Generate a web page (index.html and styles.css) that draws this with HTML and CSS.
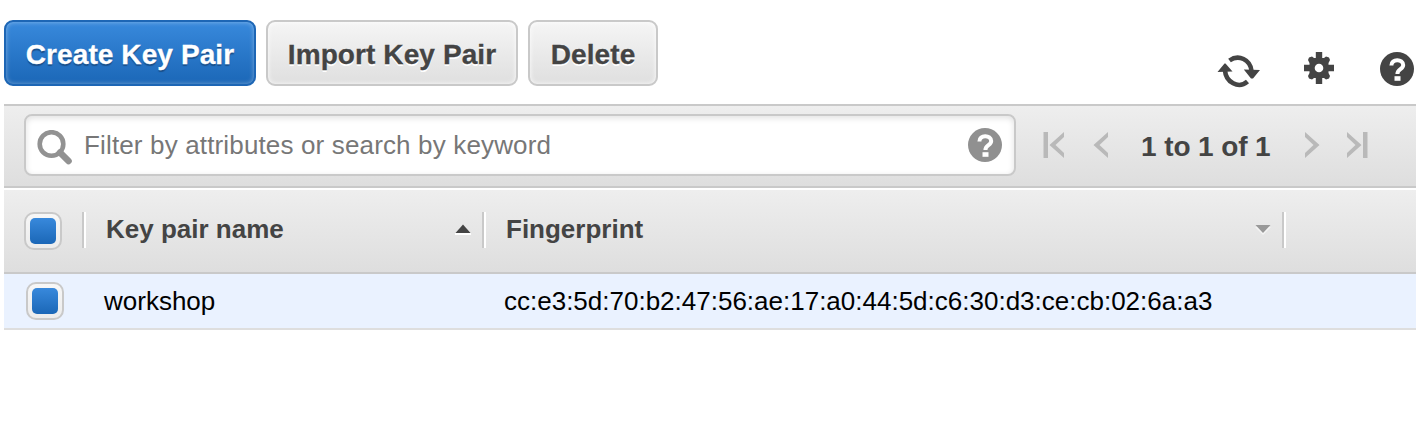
FILE: index.html
```html
<!DOCTYPE html>
<html lang="en">
<head>
<meta charset="utf-8">
<title>Key Pairs</title>
<link rel="stylesheet" href="styles.css">
</head>
<body>
<main class="page">
  <header class="actions">
    <button class="btn primary">Create Key Pair</button>
    <button class="btn">Import Key Pair</button>
    <button class="btn delete">Delete</button>
    <div class="tools">
      <svg class="refresh" width="44" height="36" viewBox="0 0 44 36" fill="none" stroke="#444" stroke-width="4.6">
        <path d="M12.500 7.500C21.500 1 33.500 6.500 34.500 18"/>
        <path d="M30.500 28.500C21.500 36.500 8.800 29 8 17.500"/>
        <path fill="#444" stroke="none" d="M26.800 16.500L43 17L36 25.500H34ZM0.500 19L7.500 10.500H8.500L15.500 18.500Z"/>
      </svg>
      <svg class="gear" width="32" height="34" viewBox="0 0 32 34">
        <g fill="#444">
          <path d="M12.800 1h6.400v32h-6.400zM1 13.800h30v6.400H1z"/>
          <path d="M6 6.500L9 5.500L11 7H21L23 5.500L26 6.500L27 9L25.500 12V22L27 25L26 27.500L23 28.500L21 27H11L9 28.500L6 27.500L5 25L6.500 22V12L5 9Z"/>
        </g>
        <circle cx="16" cy="17" r="4.300" fill="#fff"/>
      </svg>
      <svg class="help" width="34" height="34" viewBox="0 0 34 34">
        <circle cx="17" cy="17" r="17" fill="#444"/>
        <path d="M11.4 13.5C11 6.7 23.2 6.4 23.2 13.1C23.2 17.5 17.4 17 17.4 22" fill="none" stroke="#fff" stroke-width="4"/>
        <path d="M14.5 24.2h6v4.6h-6z" fill="#fff"/>
      </svg>
    </div>
  </header>

  <section class="filterbar">
    <div class="search">
      <svg class="magnifier" width="36" height="36" viewBox="0 0 36 36" fill="none" stroke="#929292">
        <circle cx="14.500" cy="14" r="11.800" stroke-width="4.600"/>
        <path d="M23 22.500L31.500 31" stroke-width="6.600" stroke-linecap="round"/>
      </svg>
      <span class="placeholder">Filter by attributes or search by keyword</span>
      <svg class="hint" width="34" height="34" viewBox="0 0 34 34">
        <circle cx="17" cy="17" r="17" fill="#909090"/>
        <path d="M11.4 13.5C11 6.7 23.2 6.4 23.2 13.1C23.2 17.5 17.4 17 17.4 22" fill="none" stroke="#fff" stroke-width="4"/>
        <path d="M14.5 24.2h6v4.6h-6z" fill="#fff"/>
      </svg>
    </div>
    <nav class="pager">
      <svg class="first" width="22" height="28" viewBox="0 0 22 28"><path fill="#b9b9b9" d="M0.500 1H5v26H0.500zM21 1v5l-8.500 8 8.500 8v5L6.500 14z"/></svg>
      <svg class="prev" width="16" height="28" viewBox="0 0 16 28"><path fill="#b9b9b9" d="M15 1v5l-8.500 8 8.500 8v5L0.500 14z"/></svg>
      <span class="range">1 to 1 of 1</span>
      <svg class="next" width="16" height="28" viewBox="0 0 16 28"><path fill="#b9b9b9" d="M1 1v5l8.500 8-8.500 8v5l14.500-13z"/></svg>
      <svg class="last" width="22" height="28" viewBox="0 0 22 28"><path fill="#b9b9b9" d="M1 1v5l8.500 8-8.500 8v5l14.500-13zM17 1h4.500v26H17z"/></svg>
    </nav>
  </section>

  <section class="grid">
    <div class="row head">
      <div class="cell select"><span class="check"></span></div>
      <div class="cell name">Key pair name
        <svg class="sort" width="16" height="11" viewBox="0 0 16 11"><path fill="#fff" d="M0 9h16v2H0z"/><path fill="#444" d="M0.500 9L8 0.500L15.500 9z"/></svg>
      </div>
      <div class="cell print">Fingerprint
        <svg class="sort" width="16" height="11" viewBox="0 0 16 11"><path fill="#f4f4f4" d="M0 3L8 11L16 3z"/><path fill="#999" d="M0.500 1h15L8 9z"/></svg>
      </div>
    </div>
    <div class="row item">
      <div class="cell select"><span class="check"></span></div>
      <div class="cell name">workshop</div>
      <div class="cell print">cc:e3:5d:70:b2:47:56:ae:17:a0:44:5d:c6:30:d3:ce:cb:02:6a:a3</div>
    </div>
  </section>
</main>
</body>
</html>
```
FILE: styles.css
```css
* { box-sizing: border-box; }

body {
  margin: 0;
  background: #fff;
  color: #444;
  font-family: "Liberation Sans", Arial, sans-serif;
}

svg { display: block; flex: none; }

.page {
  width: 1416px;
  height: 422px;
  padding-left: 4px;
  overflow: hidden;
}

.actions {
  display: flex;
  gap: 10px;
  height: 104px;
  padding-top: 20px;
}

.btn {
  width: 252px;
  height: 66px;
  padding: 3px 0 0;
  border: 2px solid #c9c9c9;
  border-radius: 9px;
  background: linear-gradient(#f5f5f5, #dfdfdf);
  box-shadow: inset 0 0 5px rgba(255, 255, 255, .9);
  color: #444;
  font: bold 28px "Liberation Sans", Arial, sans-serif;
  letter-spacing: .1px;
  text-shadow: 0 2px 0 #fff;
  white-space: nowrap;
  -webkit-text-stroke: .3px;
}

.btn.primary {
  border-color: #1d66b5;
  background: linear-gradient(#3889dc, #1b67b7);
  box-shadow: inset 0 0 5px rgba(255, 255, 255, .4);
  color: #fff;
  text-shadow: 0 2px 1px #194f8b;
}

.btn.delete { width: 130px; }

.tools {
  display: flex;
  align-items: flex-start;
  margin-left: auto;
  padding-top: 31px;
}

.refresh { margin-top: 2px; }
.gear { margin: 0 45px 0 42px; }
.help { margin: 1px 2px 0 0; }

.filterbar {
  display: flex;
  height: 84px;
  padding: 8px 20px;
  border: solid #c9c9c9;
  border-width: 2px 0;
  background: linear-gradient(#eee, #dedede);
}

.search {
  display: flex;
  align-items: center;
  width: 992px;
  height: 62px;
  padding: 0 12px 0 11px;
  border: 2px solid #c9c9c9;
  border-radius: 8px;
  background: #fff;
  box-shadow: inset 0 2px 6px rgba(0, 0, 0, .12);
}

.magnifier { margin: 5px 11px 0 0; }

.placeholder {
  color: #777;
  font-size: 26px;
  letter-spacing: .15px;
  line-height: 30px;
}

.hint { margin-left: auto; }

.pager {
  display: flex;
  align-items: flex-start;
  padding-top: 17px;
  margin-left: 27px;
}

.prev { margin-left: 28px; }

.range {
  width: 132px;
  margin: 0 31px 0 32px;
  font-size: 28px;
  font-weight: bold;
  letter-spacing: -.1px;
  line-height: 32px;
  white-space: nowrap;
}

.last { margin-left: 26px; }

.grid { padding-top: 2px; }

.row { display: flex; font-size: 26px; }

.head {
  height: 84px;
  padding-top: 22px;
  border-bottom: 2px solid #c9c9c9;
  background: linear-gradient(#eee, #dedede);
  font-weight: bold;
}

.head .cell {
  display: flex;
  justify-content: space-between;
  height: 36px;
  border-right: 2px solid #fff;
  line-height: 34px;
  box-shadow: inset -2px 0 0 #c9c9c9;
}

.head .sort { margin-top: 12px; }

.select { width: 82px; padding-left: 20px; }
.name { width: 400px; padding: 0 13px 0 20px; }
.print { width: 800px; padding: 0 13px 0 20px; }

.item {
  align-items: center;
  height: 56px;
  border-bottom: 2px solid #dedede;
  background: #eaf2ff;
  color: #000;
}

.item .select { width: 80px; padding-left: 22px; }

.check {
  display: block;
  flex: none;
  width: 38px;
  height: 38px;
  padding: 4px;
  border: 2px solid #c9c9c9;
  border-radius: 10px;
  background: linear-gradient(#f7f7f7, #ececec);
}

.check::before {
  content: "";
  display: block;
  height: 26px;
  border-radius: 5px;
  background: linear-gradient(#3889dc, #1b67b7);
}
```
